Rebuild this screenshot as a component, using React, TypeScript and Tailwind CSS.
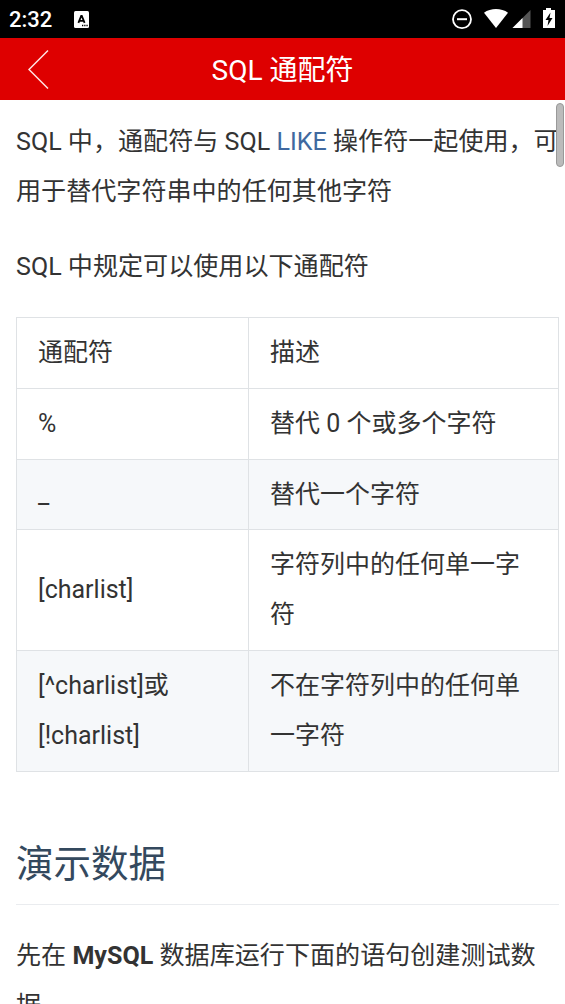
const rows = [
  { id: 'percent', height: 'h-[71px]', symbol: ['%'], desc: ['替代 0 个或多个字符'] },
  { id: 'underscore', height: 'h-[70px]', symbol: ['_'], desc: ['替代一个字符'] },
  { id: 'charlist', height: 'h-[121px]', symbol: ['[charlist]'], desc: ['字符列中的任何单一字', '符'] },
  { id: 'not-charlist', height: 'h-[121px]', symbol: ['[^charlist]或', '[!charlist]'], desc: ['不在字符列中的任何单', '一字符'] },
]

function Lines({ lines }: { lines: string[] }) {
  return (
    <>
      {lines.map((line) => (
        <span key={line} className="block">{line}</span>
      ))}
    </>
  )
}

function StatusBar() {
  return (
    <div className="h-[38px] shrink-0 bg-black text-white flex items-center justify-between pl-[9px] pr-[10px]">
      <div className="flex items-center">
        <span className="w-[65px] pt-px text-[22px] leading-[37px] font-medium">2:32</span>
        <svg width="15" height="17" viewBox="0 0 15 17">
          <rect width="15" height="17" rx="1.5" fill="#fff" />
          <path d="M4.400 11.800 7.200 5h.6l2.800 6.800M5.500 9.800h4" fill="none" stroke="#000" strokeWidth="1.8" />
          <path d="M8 14.500h1.300M10.200 14.500h1.300M12.400 14.500h1.300" stroke="#000" strokeWidth="1.3" />
        </svg>
      </div>
      <svg width="104" height="22" viewBox="0 0 104 22">
        {/* do not disturb */}
        <circle cx="11" cy="11.2" r="9" fill="none" stroke="#fff" strokeWidth="1.8" />
        <path d="M6 11.200h10" stroke="#fff" strokeWidth="2" />
        {/* wifi */}
        <path d="M33 4.700C36.200 2.200 40.800 1 45 1s8.800 1.200 12 3.700L45 20z" fill="#fff" />
        {/* signal */}
        <path d="M79.500 2v18h-18z" fill="#555" />
        <path d="M71.500 10v10h-10z" fill="#fff" />
        {/* battery */}
        <path d="M95 0h5v2h4v18H92V2h3z" fill="#fff" />
        <path d="M99.500 4.500 94.500 12h3l-1 6 5-8h-3z" fill="#000" />
      </svg>
    </div>
  )
}

export default function App() {
  return (
    <div className="relative flex flex-col w-[565px] h-[1004px] overflow-hidden bg-white text-[#333] font-['Roboto','Noto_Sans_CJK_SC',sans-serif]">
      <StatusBar />

      {/* Header */}
      <header className="grid grid-cols-[70px_1fr_70px] items-center h-[62px] shrink-0 bg-[#de0000] text-white">
        <svg width="22" height="40" viewBox="0 0 22 40" className="ml-7" fill="none" stroke="#ffe4e4" strokeWidth="1.5">
          <path d="M20 1.500 1 20.500 20 39.500" />
        </svg>
        <h1 className="pt-[3px] text-center text-[28px] leading-[59px] whitespace-nowrap">SQL 通配符</h1>
      </header>

      {/* Article */}
      <main lang="zh-CN" className="w-[543px] ml-4 pt-[17px] text-[25px] leading-[50px] whitespace-nowrap">
        <p className="text-[25.08px]">
          SQL 中，通配符与 SQL <a className="text-[#4069a0]">LIKE</a> 操作符一起使用，可
          <br />
          用于替代字符串中的任何其他字符
        </p>
        <p className="mt-[25px] text-[25.08px]">SQL 中规定可以使用以下通配符</p>

        <table className="w-[543px] mt-[25px] table-fixed border-collapse text-left [&_td]:border [&_td]:border-[#dfe2e5] [&_td]:py-0 [&_td]:px-[21px] [&_th]:border [&_th]:border-[#dfe2e5] [&_th]:py-0 [&_th]:px-[21px]">
          <thead>
            <tr className="h-[71px]">
              <th className="w-[232px] font-normal">通配符</th>
              <th className="font-normal">描述</th>
            </tr>
          </thead>
          <tbody>
            {rows.map((row) => (
              <tr key={row.id} className={`${row.height} even:bg-[#f6f8fa]`}>
                <td><Lines lines={row.symbol} /></td>
                <td><Lines lines={row.desc} /></td>
              </tr>
            ))}
          </tbody>
        </table>

        <h2 className="mt-[52px] h-[81px] border-b border-[#eaecef] text-[37.5px] leading-[80px] text-[#34495e]">演示数据</h2>

        <p className="mt-[26px] text-[25.08px]">
          先在 <strong className="font-bold">MySQL</strong> 数据库运行下面的语句创建测试数
          <br />
          据
        </p>
      </main>

      {/* Scroll thumb */}
      <div className="absolute left-[556px] top-[103px] w-2 h-16 rounded-full bg-[#bbb] border border-[#999]" />
    </div>
  )
}
